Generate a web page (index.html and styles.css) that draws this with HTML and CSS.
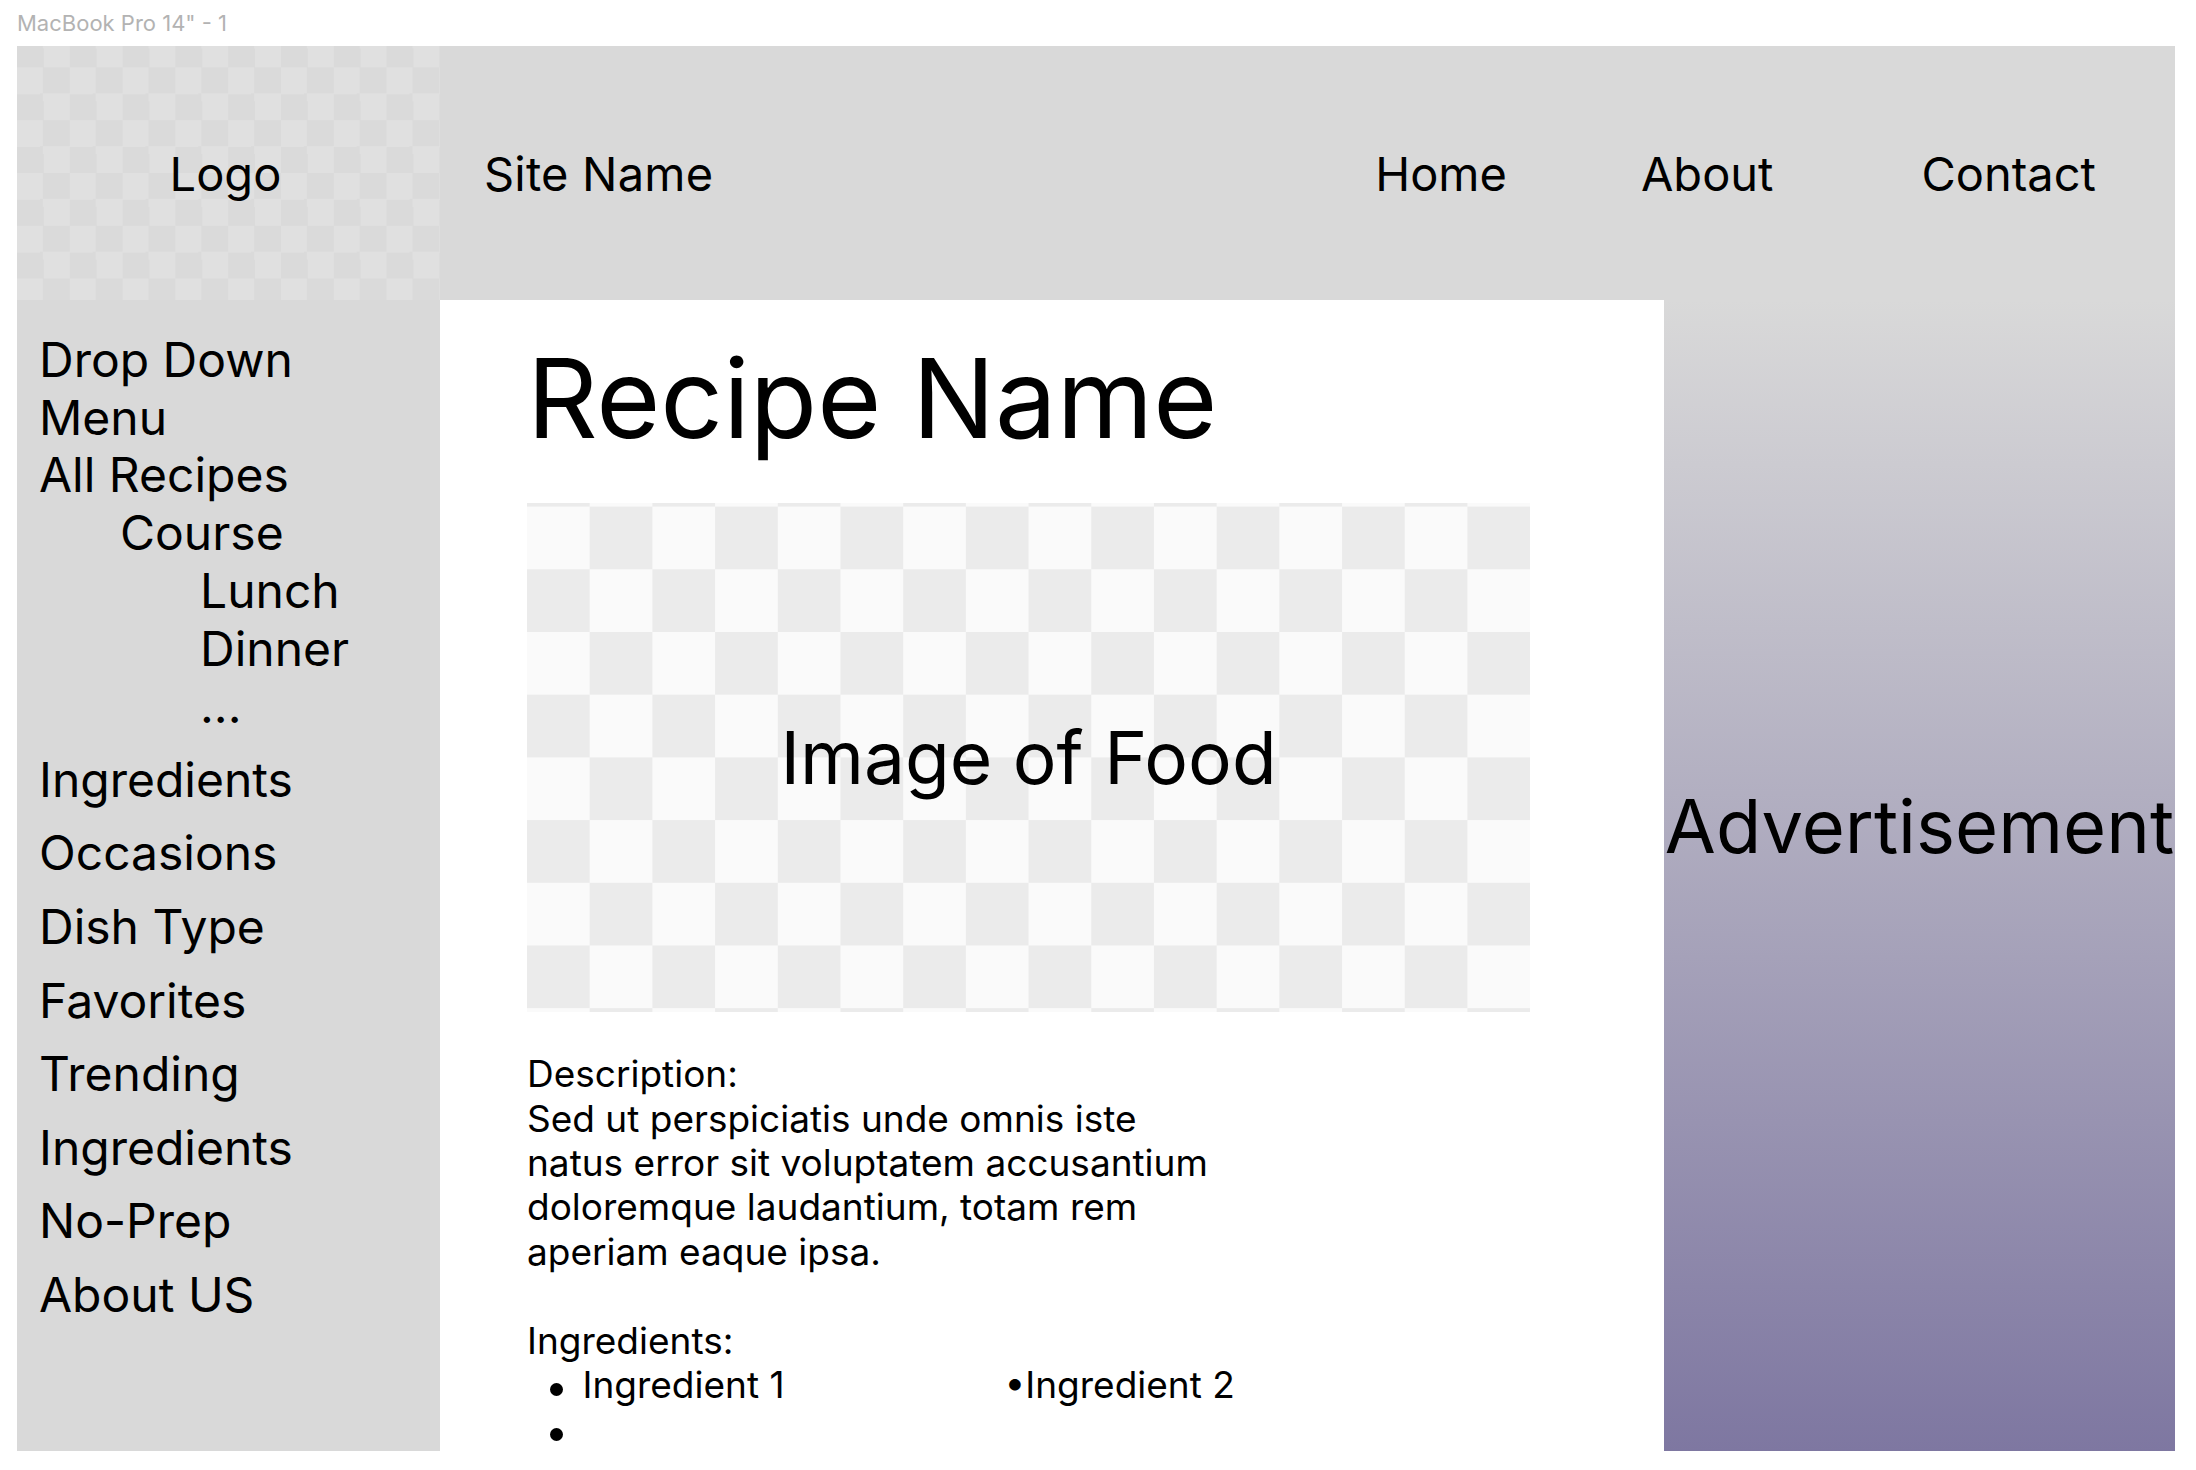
FILE: index.html
```html
<!DOCTYPE html>
<html lang="en">
<head>
<meta charset="utf-8">
<title>MacBook Pro 14" - 1</title>
<link rel="stylesheet" href="styles.css">
</head>
<body>
<div class="canvas-label">MacBook Pro 14" - 1</div>
<div class="frame">
  <div class="logo"><span>Logo</span></div>
  <header class="header">
    <div class="site-name">Site Name</div>
    <nav class="nav">
      <span class="nav-home">Home</span>
      <span class="nav-about">About</span>
      <span class="nav-contact">Contact</span>
    </nav>
  </header>
  <aside class="sidebar">
    <div class="menu-tree">
      <div>Drop Down</div>
      <div>Menu</div>
      <div>All Recipes</div>
      <div class="l1">Course</div>
      <div class="l2">Lunch</div>
      <div class="l2">Dinner</div>
      <div class="l2">...</div>
    </div>
    <ul class="menu-list">
      <li>Ingredients</li>
      <li>Occasions</li>
      <li>Dish Type</li>
      <li>Favorites</li>
      <li>Trending</li>
      <li>Ingredients</li>
      <li>No-Prep</li>
      <li>About US</li>
    </ul>
  </aside>
  <main class="main">
    <h1 class="title">Recipe Name</h1>
    <div class="food-image"><span>Image of Food</span></div>
    <div class="details">
      <p>Description:<br>Sed ut perspiciatis unde omnis iste<br>natus error sit voluptatem accusantium<br>doloremque laudantium, totam rem<br>aperiam eaque ipsa.</p>
      <p class="blank"></p>
      <p>Ingredients:</p>
      <ul class="ingredients">
        <li><span class="ing1">Ingredient 1</span><span class="ing2">•Ingredient 2</span></li>
        <li></li>
      </ul>
    </div>
  </main>
  <div class="ad"><span>Advertisement</span></div>
</div>
</body>
</html>
```

FILE: styles.css
```css
html, body {
  margin: 0;
  padding: 0;
  background: #ffffff;
}

body {
  font-family: Inter, "Noto Sans", "Liberation Sans", sans-serif;
  color: #000000;
  width: 2196px;
  height: 1470px;
  overflow: hidden;
}

.canvas-label {
  box-sizing: border-box;
  height: 46px;
  padding: 10px 0 0 17px;
  font-size: 22px;
  line-height: normal;
  color: #b3b3b3;
}

.frame {
  margin-left: 17px;
  width: 2158px;
  height: 1405px;
  display: grid;
  grid-template-columns: 423px 1224px 511px;
  grid-template-rows: 254px 1151px;
  overflow: hidden;
  background: #ffffff;
}

.logo {
  grid-column: 1;
  grid-row: 1;
  display: flex;
  align-items: center;
  justify-content: center;
  padding-right: 6px;
  font-size: 47px;
  background-color: #e0e0e0;
  background-image: repeating-conic-gradient(#dadada 0 25%, #e0e0e0 0 50%);
  background-size: 52.8px 52.8px;
  background-position: 0 21.4px;
}

.header {
  grid-column: 2 / 4;
  grid-row: 1;
  display: flex;
  align-items: center;
  background: #d9d9d9;
  font-size: 47px;
  padding-left: 44px;
  padding-right: 79px;
}

.site-name {
  letter-spacing: 0.2px;
}

.nav {
  margin-left: auto;
  display: flex;
}

.nav-home {
  margin-right: 134px;
}

.nav-about {
  margin-right: 148px;
}

.sidebar {
  grid-column: 1;
  grid-row: 2;
  background: #d9d9d9;
  padding: 31px 0 0 22px;
  font-size: 48px;
  line-height: 57.7px;
}

.l1 {
  padding-left: 81px;
}

.l2 {
  padding-left: 161px;
}

.menu-list {
  list-style: none;
  margin: 0;
  padding: 0;
}

.menu-list li {
  margin-top: 15.9px;
}

.main {
  grid-column: 2;
  grid-row: 2;
  padding: 31px 0 0 87px;
  background: #ffffff;
}

.title {
  margin: 0 0 37.6px;
  font-size: 110px;
  font-weight: 400;
  line-height: normal;
}

.food-image {
  width: 1003px;
  height: 509px;
  display: flex;
  align-items: center;
  justify-content: center;
  font-size: 73px;
  background-color: #fafafa;
  background-image: repeating-conic-gradient(#ebebeb 0 25%, #fafafa 0 50%);
  background-size: 125.4px 125.4px;
  background-position: 0 3.6px;
}

.details {
  margin-top: 40.5px;
  font-size: 37px;
  line-height: 44.4px;
}

.details p {
  margin: 0;
}

.blank {
  height: 44.4px;
}

.ingredients {
  list-style: none;
  margin: 0;
  padding: 0;
}

.ingredients li {
  display: flex;
  align-items: flex-start;
  min-height: 44.4px;
}

.ingredients li::before {
  content: "";
  flex: none;
  width: 13px;
  height: 13px;
  border-radius: 50%;
  background: #000000;
  margin: 20.5px 20px 0 22.5px;
}

.ing1 {
  width: 422px;
  flex: none;
}

.ad {
  grid-column: 3;
  grid-row: 2;
  background: linear-gradient(180deg, #d9d9d9 0%, #7e77a1 100%);
  padding-top: 481px;
  text-align: center;
  font-size: 74px;
  line-height: normal;
  white-space: nowrap;
}
```
